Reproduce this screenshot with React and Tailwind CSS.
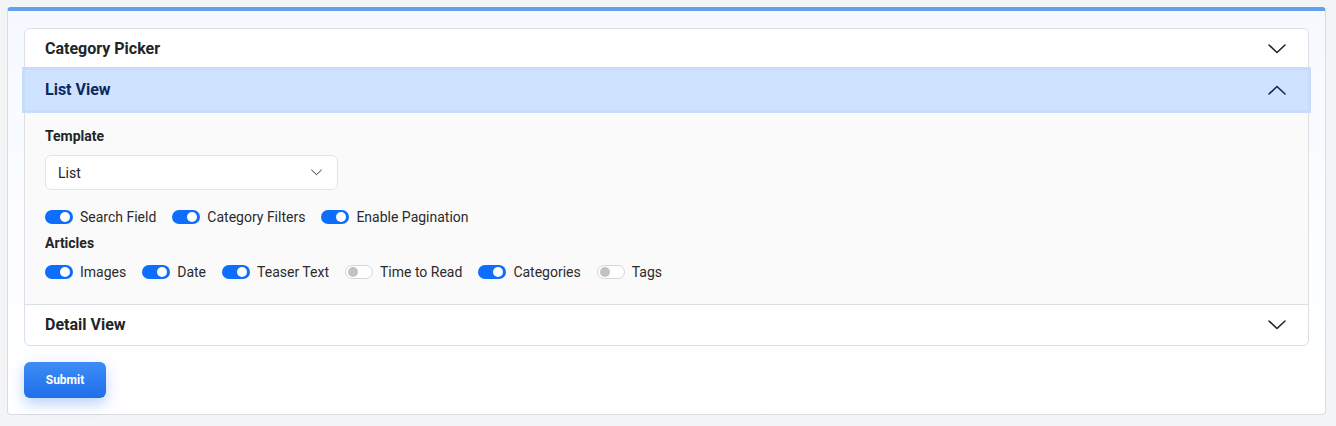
import React, { useState } from "react";

const Chevron = ({ up = false, className = "" }) => (
  <svg
    viewBox="0 0 18 10"
    className={className}
    fill="none"
    stroke="currentColor"
    strokeWidth="1.6"
    strokeLinecap="round"
    strokeLinejoin="round"
  >
    {up ? <path d="M1 9 L9 1.5 L17 9" /> : <path d="M1 1 L9 8.5 L17 1" />}
  </svg>
);

const Toggle = ({ label, on }) => (
  <label className="flex items-center gap-[7px] h-5 cursor-pointer">
    {on ? (
      <span className="relative w-7 h-[14px] rounded-full bg-[#0d6efd]">
        <span className="absolute right-[3px] top-[2px] w-[10px] h-[10px] rounded-full bg-white" />
      </span>
    ) : (
      <span className="relative w-7 h-[14px] rounded-full bg-white border border-[#d6d6d6]">
        <span className="absolute left-[2px] top-[1px] w-[10px] h-[10px] rounded-full bg-[#c2c2c2]" />
      </span>
    )}
    <span className="text-sm text-[#2b2b2b]">{label}</span>
  </label>
);

const Header = ({ title, open, onClick, last }) => (
  <button
    onClick={onClick}
    className={
      open
        ? "relative z-10 w-full h-10 flex items-center justify-between pl-5 pr-[22px] bg-[#cfe2ff] text-[#0a2a5e] shadow-[0_0_0_3px_#c7dcfa,0_0_0_1px_#a9c8f3]"
        : "w-full h-10 flex items-center justify-between pl-5 pr-[22px] text-[#212529] bg-white " +
          (last ? "rounded-b-md" : "rounded-t-md")
    }
  >
    <span className="text-base font-bold">{title}</span>
    <Chevron up={open} className="w-[18px] h-[10px]" />
  </button>
);

export default function App() {
  const [open, setOpen] = useState("list");

  return (
    <div
      className="min-h-[426px] bg-[#f3f4f6] pl-[7px] pr-[10px] pt-[7px] pb-[11px]"
      style={{ fontFamily: "Roboto, 'Liberation Sans', sans-serif" }}
    >
      <div className="rounded-[4px] border border-[#d9dce1] border-t-4 border-t-[#63a0f0] bg-gradient-to-b from-[#f5f9ff] via-[#fbfdff] to-white px-4 pt-[17px] pb-[16px]">
        <div className="rounded-md border border-[#dedfe2] bg-white">
          <div className="border-b border-[#dedfe2]">
            <Header
              title="Category Picker"
              open={open === "cat"}
              onClick={() => setOpen(open === "cat" ? "" : "cat")}
            />
          </div>
          <div className="border-b border-[#dedfe2]">
            <Header
              title="List View"
              open={open === "list"}
              onClick={() => setOpen(open === "list" ? "" : "list")}
            />
            {open === "list" && (
              <div className="bg-[#fafafa] px-5 pt-4 pb-[22px]">
                <div className="text-sm font-bold text-[#212529] leading-5">Template</div>
                <div className="mt-[9px] w-[293px] h-[35px] rounded-md border border-[#e2e3e5] bg-white flex items-center justify-between pl-3 pr-[15px]">
                  <span className="text-sm text-[#212529]">List</span>
                  <Chevron className="w-[11px] h-[7px] text-[#333]" />
                </div>
                <div className="mt-[17px] flex items-center gap-4">
                  <Toggle label="Search Field" on />
                  <Toggle label="Category Filters" on />
                  <Toggle label="Enable Pagination" on />
                </div>
                <div className="mt-[6px] text-sm font-bold text-[#212529] leading-5">Articles</div>
                <div className="mt-[9px] flex items-center gap-4">
                  <Toggle label="Images" on />
                  <Toggle label="Date" on />
                  <Toggle label="Teaser Text" on />
                  <Toggle label="Time to Read" />
                  <Toggle label="Categories" on />
                  <Toggle label="Tags" />
                </div>
              </div>
            )}
          </div>
          <Header
            title="Detail View"
            last
            open={open === "detail"}
            onClick={() => setOpen(open === "detail" ? "" : "detail")}
          />
        </div>
        <button className="mt-4 w-[82px] h-9 rounded-md bg-gradient-to-b from-[#3d8cf6] to-[#1f6fe9] text-white text-xs font-bold shadow-[0_6px_14px_rgba(37,110,235,0.3)]">
          Submit
        </button>
      </div>
    </div>
  );
}
